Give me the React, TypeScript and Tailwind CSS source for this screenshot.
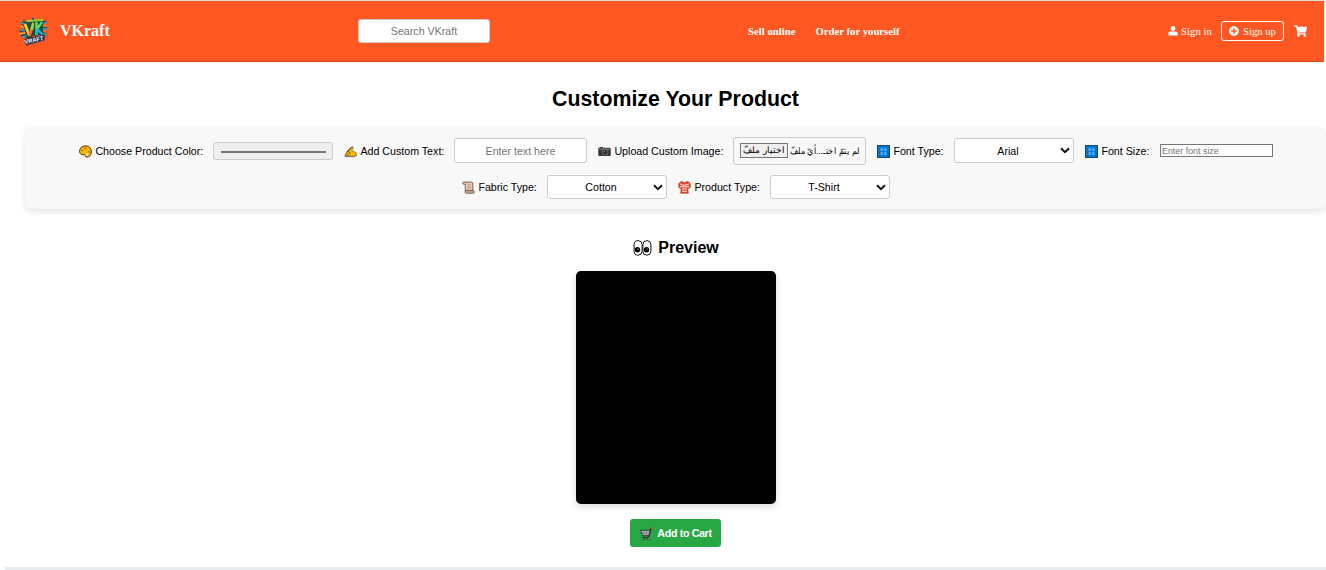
import React from 'react';
import { FaPlusCircle, FaShoppingCart } from 'react-icons/fa';

type IconProps = { className?: string };

const Person = ({ className }: IconProps) => (
  <svg viewBox="0 0 20 20" className={className} fill="currentColor">
    <circle cx="10" cy="5" r="4.800" />
    <path d="M0.500 19v-3.500c0-3 2-4.500 5-4.500h9c3 0 5 1.500 5 4.500V19z" />
  </svg>
);

const Palette = ({ className }: IconProps) => (
  <svg viewBox="0 0 24 24" className={className}>
    <path d="M12 1.500C5.500 1.500 1 6 1 11.500S5 18.500 9 18c2-.3 2.500 0 2.800 2 .3 1.500 1.200 2.500 2.700 2.500C19.500 22.500 23 18 23 12 23 6 18.500 1.500 12 1.500z" fill="#fdb300" stroke="#4a3c1e" strokeWidth="1.800" />
    <circle cx="15" cy="17.500" r="2" fill="#fff" />
    <circle cx="6" cy="10" r="1.700" fill="#35a535" />
    <circle cx="11.500" cy="6" r="1.700" fill="#e8452a" />
    <circle cx="18.500" cy="12.500" r="1.600" fill="#3d7fd8" />
  </svg>
);

const Writing = ({ className }: IconProps) => (
  <svg viewBox="0 0 24 24" className={className}>
    <path d="M5 13 12 5l4-2 1 3-3 4 8 4 1 6-5 1H7z" fill="#ffb900" stroke="#5a4210" strokeWidth="1.100" strokeLinejoin="round" />
    <path d="M1.500 19 7 11l5 4-6 5z" fill="#f5aa00" stroke="#4a3812" strokeWidth="1.100" />
    <path d="M7 12 14 4" stroke="#333" strokeWidth="1.600" />
    <path d="M1 21.500h19" stroke="#777" strokeWidth="1.800" />
  </svg>
);

const Camera = ({ className }: IconProps) => (
  <svg viewBox="0 0 24 24" className={className}>
    <rect x="0.500" y="5" width="23" height="15.500" rx="1.500" fill="#353535" />
    <rect x="3" y="3.500" width="6" height="3" fill="#444" />
    <rect x="1" y="6" width="22" height="3" fill="#666" />
    <circle cx="13" cy="13.500" r="6" fill="#6e7276" />
    <circle cx="13" cy="13.500" r="4.200" fill="#222" />
    <circle cx="12" cy="12.500" r="1.500" fill="#8d99a5" />
  </svg>
);

const Letters = ({ className }: IconProps) => (
  <svg viewBox="0 0 24 24" className={className}>
    <rect x="1" y="1" width="22" height="22" fill="#0078d7" stroke="#23415c" strokeWidth="2" />
    <path d="M7 6.500h3.500v4H7zM13.500 6.500H17v4h-3.500zM7 14h3.500v4H7zM13.500 14H17v4h-3.500z" fill="#4ba5ec" stroke="#9bd0fa" strokeWidth="1" strokeDasharray="2 1.500" />
  </svg>
);

const Scroll = ({ className }: IconProps) => (
  <svg viewBox="0 0 24 24" className={className}>
    <path d="M3 2h14c2 0 3 1 3 3v13H6V6H3C.500 6 .500 2 3 2z" fill="#e8c8b0" stroke="#5c4a40" strokeWidth="1.500" />
    <path d="M6 18h15c2.500 0 2.500 4.500 0 4.500H8C5.500 22.500 5 20 6 18z" fill="#dcb59b" stroke="#5c4a40" strokeWidth="1.500" />
    <path d="M9.500 7h7M9.500 10.500h7M9.500 14h7" stroke="#b08c78" strokeWidth="1.300" />
  </svg>
);

const Shirt = ({ className }: IconProps) => (
  <svg viewBox="0 0 24 24" className={className}>
    <path d="M5 1.500h4c1 2.500 5 2.500 6 0h4L22.500 5v7L18 14l1 8.500H5L6 14l-4.500-2V5z" fill="#f04a30" stroke="#8c2a1c" strokeWidth="1.200" />
    <path d="M4 5.500c4 3 12 3 16 0M3.500 10.500h17M8 14.500h8M7.500 19h9" stroke="#fff" strokeWidth="1.700" fill="none" />
  </svg>
);

const Eyes = ({ className }: IconProps) => (
  <svg viewBox="0 0 18 16" className={className}>
    <rect x="0.600" y="0.600" width="8" height="14.600" rx="4" fill="#fff" stroke="#111" strokeWidth="1" />
    <rect x="9.400" y="0.600" width="8" height="14.600" rx="4" fill="#fff" stroke="#111" strokeWidth="1" />
    <circle cx="4" cy="9.700" r="2.700" fill="#000" />
    <circle cx="13" cy="9.700" r="2.700" fill="#000" />
    <circle cx="4.500" cy="9" r="0.600" fill="#fff" />
    <circle cx="13.500" cy="9" r="0.600" fill="#fff" />
  </svg>
);

const Trolley = ({ className }: IconProps) => (
  <svg viewBox="0 0 24 24" className={className}>
    <path d="M1 6h18l-2 10H5z" fill="#b0b0b5" stroke="#2d2d2d" strokeWidth="1.600" />
    <path d="M7 7v8M12 7v8M3 11h14" stroke="#66666b" strokeWidth="0.900" />
    <path d="M22 3h-2l-4 16H5" stroke="#2d2d2d" strokeWidth="2" fill="none" />
    <path d="M20 2.500h4" stroke="#d33526" strokeWidth="3.500" />
    <circle cx="7" cy="21.500" r="1.800" fill="#fff" stroke="#111" strokeWidth="1.600" />
    <circle cx="15.500" cy="21.500" r="1.800" fill="#fff" stroke="#111" strokeWidth="1.600" />
  </svg>
);

const Logo = ({ className }: IconProps) => (
  <svg viewBox="0 0 30 30" className={className}>
    <path d="M7 5 24 3l2 14-19 4z" fill="#23504f" />
    <path d="M3 7l4-2M1.500 14l5-1M3 19l5-2" stroke="#234c5b" strokeWidth="2.600" />
    <path d="M3 9l5 2M1.500 17l6-1" stroke="#ffa726" strokeWidth="1.500" />
    <path d="M3 6l4 1M2 13l5 0M4 20l4-1" stroke="#36a9bf" strokeWidth="1.400" />
    <path d="M24 6l4-1M25 11l4 1M24 16l4 2" stroke="#234c5b" strokeWidth="3" />
    <path d="M24 7l4-1M25 12l4 0M24 16l4 2" stroke="#2bb3e3" strokeWidth="1.600" />
    <path d="M25 9l3 0M25 14l3 0" stroke="#ff9d20" strokeWidth="1.200" />
    <path d="M9 4 25 3" stroke="#8bd534" strokeWidth="1.800" />
    <circle cx="15" cy="1.800" r="1.200" fill="#3159a0" />
    <circle cx="6" cy="3" r="1" fill="#2d8077" />
    <path d="M7 7l4.500 12L15.500 6" stroke="#183631" strokeWidth="4.600" fill="none" />
    <path d="M7 7l4.500 12" stroke="#f8c526" strokeWidth="3" />
    <path d="M11.500 19 15.500 6" stroke="#ef6931" strokeWidth="2.800" />
    <path d="M13.500 13 15.500 6" stroke="#9bd33b" strokeWidth="2.800" />
    <path d="M18.500 5v13M24 5l-5 7 5 5" stroke="#183631" strokeWidth="4.300" fill="none" />
    <path d="M18.500 5v13M24 5l-5 7" stroke="#5bdc5d" strokeWidth="2.600" fill="none" />
    <path d="M18.500 12v6M19 12l5 5" stroke="#17b6c6" strokeWidth="2.600" />
    <path d="M6 22 27 17.500l-.5 6L8 28.500z" fill="#283550" />
    <text x="7" y="27" transform="rotate(-12 7 27)" fontSize="6" fontWeight="700" textLength="19" lengthAdjust="spacingAndGlyphs" fill="#eef0f5" fontFamily="Liberation Sans">VRAFT</text>
  </svg>
);

const Label = ({ icon: Icon, text, className }: { icon: React.FC<IconProps>; text: string; className: string }) => (
  <label className={`flex shrink-0 items-center gap-[3.400px] pl-px whitespace-nowrap ${className}`}>
    <Icon className="h-[13px] w-[13px] shrink-0" />
    <span>{text}</span>
  </label>
);

const Select = ({ value, className }: { value: string; className: string }) => (
  <button className={`flex w-[120px] shrink-0 items-center rounded-[3px] border border-[#ccc] bg-white pl-px pr-[3px] ${className}`}>
    <span className="flex-1 text-center">{value}</span>
    <svg viewBox="0 0 10 7" className="h-[7px] w-[10px]">
      <path d="M1 1.200 5 5.200l4-4" fill="none" stroke="#111" strokeWidth="2" />
    </svg>
  </button>
);

export default function App() {
  return (
    <div className="h-[570px] w-[1326px] overflow-hidden bg-white text-[10.67px] text-black font-['Liberation_Sans',Arial,sans-serif]">
      <header className="flex h-[62px] w-[1324px] items-center border-t border-b border-t-[#ddd] border-b-[#e04a1b] bg-[#ff5722] font-['Liberation_Serif',serif] text-white">
        <div className="flex w-[358px] items-center gap-[12px] pl-[18px]">
          <Logo className="mt-[2px] h-[30px] w-[30px]" />
          <span className="text-[16px] font-bold">VKraft</span>
        </div>
        <input
          placeholder="Search VKraft"
          className="h-[24px] w-[132px] rounded-[3px] border border-[#ccc] bg-white text-center font-['Liberation_Sans',sans-serif] text-[10.67px] placeholder:text-[#757575] placeholder:opacity-100"
        />
        <nav className="ml-[258px] flex gap-[20px] text-[10.67px] font-bold tracking-[0.03px]">
          <a>Sell online</a>
          <a>Order for yourself</a>
        </nav>
        <div className="mr-[17px] ml-auto flex items-center text-[10.67px]">
          <a className="flex items-center gap-[3px] tracking-[0.06px]">
            <Person className="h-[10px] w-[10px]" />
            Sign in
          </a>
          <a className="ml-[9px] flex h-[20px] w-[63px] items-center justify-center gap-[4px] rounded-[3px] border border-white">
            <FaPlusCircle className="h-[10px] w-[10px]" />
            Sign up
          </a>
          <FaShoppingCart className="ml-[10px] h-[12px] w-[13px]" />
        </div>
      </header>

      <main className="flex flex-col items-center pl-[25px]">
        <h1 className="mt-[24px] h-[26px] text-[21.33px] leading-[26px] font-bold">Customize Your Product</h1>

        <section className="mt-[15px] h-[82px] w-[1301px] rounded-[7px] bg-[#f8f8f8] pt-[10px] shadow-[0_3px_6px_rgba(0,0,0,0.1)]">
          <div className="flex h-[28px] items-center gap-[10px] pl-[53px]">
            <Label icon={Palette} text="Choose Product Color:" className="w-[125px]" />
            <div className="flex h-[18px] w-[120px] shrink-0 items-center rounded-[3px] border border-[#ccc] bg-[#efefef] pl-[7px] pr-[6px]">
              <div className="mt-[2px] h-[2px] w-full bg-[#777]" />
            </div>
            <Label icon={Writing} text="Add Custom Text:" className="w-[101px]" />
            <input
              placeholder="Enter text here"
              className="mb-px h-[25px] w-[133px] shrink-0 rounded-[3px] border border-[#ccc] bg-white text-center placeholder:text-[#757575] placeholder:opacity-100"
            />
            <Label icon={Camera} text="Upload Custom Image:" className="w-[126px]" />
            <div className="flex h-[28px] w-[133px] shrink-0 items-center gap-[3px] rounded-[3px] border border-[#ccc] pr-[5px] pl-[6px] text-[8.900px]">
              <button dir="rtl" className="mb-[2px] flex h-[15px] w-[48px] shrink-0 items-center justify-center border border-[#767676] bg-[#efefef] leading-none whitespace-nowrap">
                <span className="pt-px">اختيار ملفّ</span>
              </button>
              <span dir="rtl" className="w-[69px] shrink-0 origin-right scale-x-[0.9] text-[9px] leading-none whitespace-nowrap">لم يتمّ اختـ...أيّ ملفّ</span>
            </div>
            <Label icon={Letters} text="Font Type:" className="w-[68px]" />
            <Select value="Arial" className="mb-px h-[25px]" />
            <Label icon={Letters} text="Font Size:" className="w-[66px]" />
            <input
              placeholder="Enter font size"
              className="mb-px h-[13px] w-[113px] shrink-0 border border-[#767676] bg-white px-px text-[8.900px] leading-[10px] placeholder:text-[#757575] placeholder:opacity-100"
            />
          </div>
          <div className="mt-[10px] flex h-[24px] items-center gap-[10px] pl-[436px]">
            <Label icon={Scroll} text="Fabric Type:" className="w-[76px]" />
            <Select value="Cotton" className="h-[24px]" />
            <Label icon={Shirt} text="Product Type:" className="w-[83px]" />
            <Select value="T-Shirt" className="h-[24px]" />
          </div>
        </section>

        <h2 className="mt-[28px] flex h-[20px] items-center gap-[6px] pl-px text-[16px] font-bold">
          <Eyes className="mt-[2px] h-[16px] w-[19px]" />
          <span className="pt-[2px]">Preview</span>
        </h2>
        <div className="mt-[14px] h-[233px] w-[200px] rounded-[5px] bg-black shadow-[0_3px_7px_rgba(0,0,0,0.15)]" />
        <button className="mt-[15px] flex h-[28px] w-[91px] items-center justify-center gap-[4px] rounded-[3px] bg-[#28a745] pl-px font-bold text-white">
          <Trolley className="h-[13px] w-[13px]" />
          <span className="tracking-[-0.340px]">Add to Cart</span>
        </button>
      </main>
      <div className="mt-[20px] ml-[5px] h-[3px] bg-[#e9ecef]" />
    </div>
  );
}
